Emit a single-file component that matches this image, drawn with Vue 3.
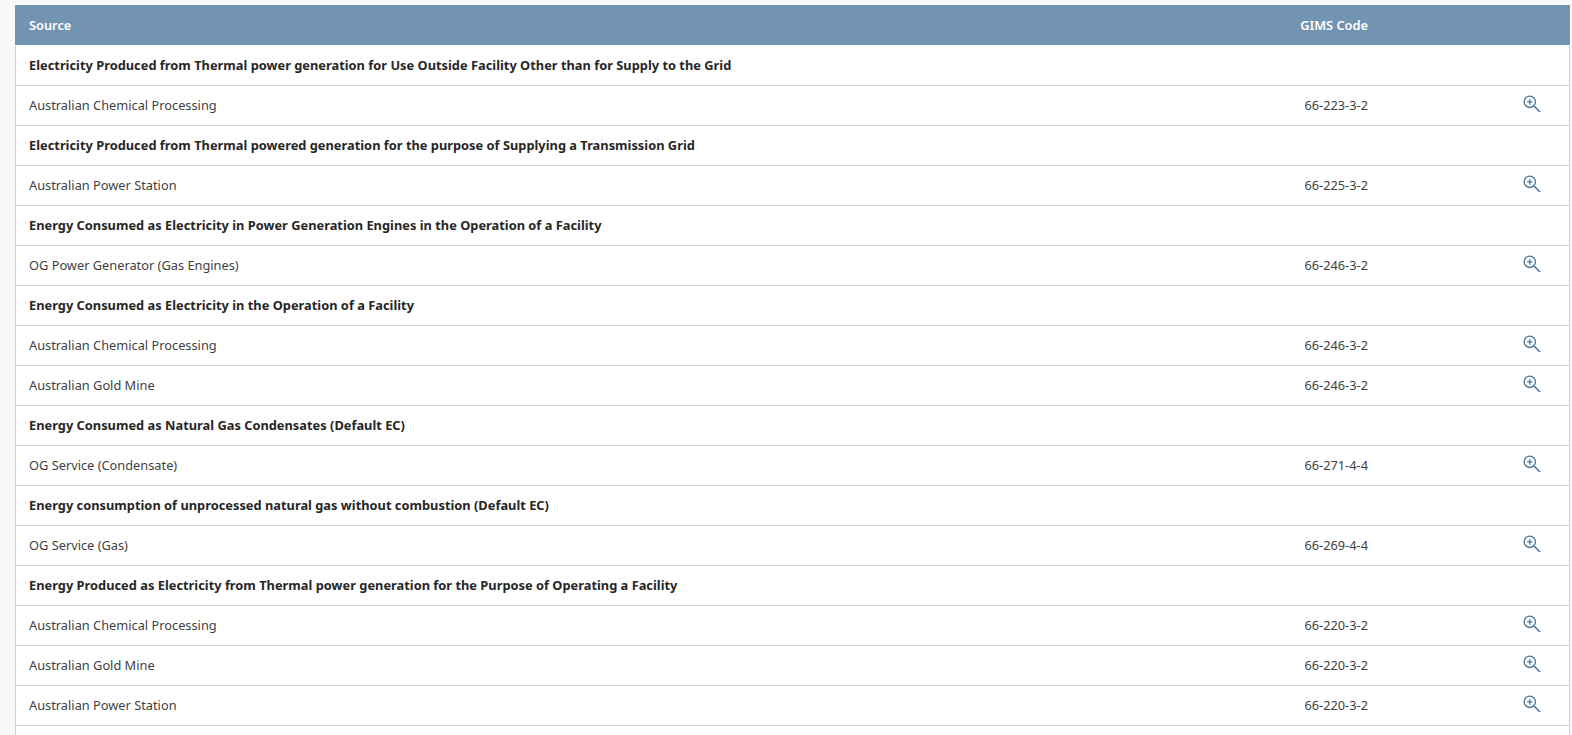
<script setup>
const rows = [
  { h: 'Electricity Produced from Thermal power generation for Use Outside Facility Other than for Supply to the Grid' },
  { s: 'Australian Chemical Processing', c: '66-223-3-2' },
  { h: 'Electricity Produced from Thermal powered generation for the purpose of Supplying a Transmission Grid' },
  { s: 'Australian Power Station', c: '66-225-3-2' },
  { h: 'Energy Consumed as Electricity in Power Generation Engines in the Operation of a Facility' },
  { s: 'OG Power Generator (Gas Engines)', c: '66-246-3-2' },
  { h: 'Energy Consumed as Electricity in the Operation of a Facility' },
  { s: 'Australian Chemical Processing', c: '66-246-3-2' },
  { s: 'Australian Gold Mine', c: '66-246-3-2' },
  { h: 'Energy Consumed as Natural Gas Condensates (Default EC)' },
  { s: 'OG Service (Condensate)', c: '66-271-4-4' },
  { h: 'Energy consumption of unprocessed natural gas without combustion (Default EC)' },
  { s: 'OG Service (Gas)', c: '66-269-4-4' },
  { h: 'Energy Produced as Electricity from Thermal power generation for the Purpose of Operating a Facility' },
  { s: 'Australian Chemical Processing', c: '66-220-3-2' },
  { s: 'Australian Gold Mine', c: '66-220-3-2' },
  { s: 'Australian Power Station', c: '66-220-3-2' }
]
</script>

<template>
  <div class="page">
    <div class="table">
      <div class="row head">
        <div class="source">Source</div>
        <div class="code">GIMS Code</div>
      </div>
      <template v-for="(r, i) in rows" :key="i">
        <div v-if="r.h" class="row group">
          <div class="source">{{ r.h }}</div>
        </div>
        <div v-else class="row item">
          <div class="source">{{ r.s }}</div>
          <div class="code">{{ r.c }}</div>
          <div class="action">
            <svg width="18" height="18" viewBox="0 0 18 18" fill="none" stroke="#4f76a3">
              <circle cx="6.8" cy="6.8" r="5.7" stroke-width="1.4" />
              <path d="M6.8 4.2v5.2M4.2 6.8h5.2" stroke-width="1.3" />
              <path d="M11 11l6 6" stroke-width="1.6" />
            </svg>
          </div>
        </div>
      </template>
      <div class="row"></div>
    </div>
  </div>
</template>

<style scoped>
.page {
  height: 735px;
  overflow: hidden;
  box-sizing: border-box;
  padding: 5px 2px 0 15px;
  background: #f9f9f9;
  font-family: "Noto Sans", "Open Sans", sans-serif;
  font-size: 12.8px;
  color: #3f3f3f;
}
.table {
  background: #fff;
  border-left: 1px solid #c8d3e0;
  border-right: 1px solid #c8d3e0;
}
.row {
  display: flex;
  align-items: center;
  height: 40px;
  box-sizing: border-box;
  padding-bottom: 2px;
  border-bottom: 1px solid #c8d3e0;
}
.source {
  padding-left: 13px;
  flex: 1;
  white-space: nowrap;
}
.code {
  white-space: nowrap;
}
.head {
  height: 41px;
  margin: 0 -1px;
  padding-right: 202px;
  padding-bottom: 0;
  background: #7393b3;
  background-clip: padding-box;
  border-bottom: 1px solid #fff;
  color: #fff;
  font-weight: 600;
}
.head .source {
  padding-left: 14px;
}
.group {
  font-weight: 700;
  letter-spacing: 0.02px;
  color: #262626;
}
.action {
  width: 18px;
  height: 18px;
  margin: 0 28px 1px 155px;
}
.action svg {
  display: block;
}
</style>
<style>
html, body { margin: 0; overflow: hidden; }
</style>
